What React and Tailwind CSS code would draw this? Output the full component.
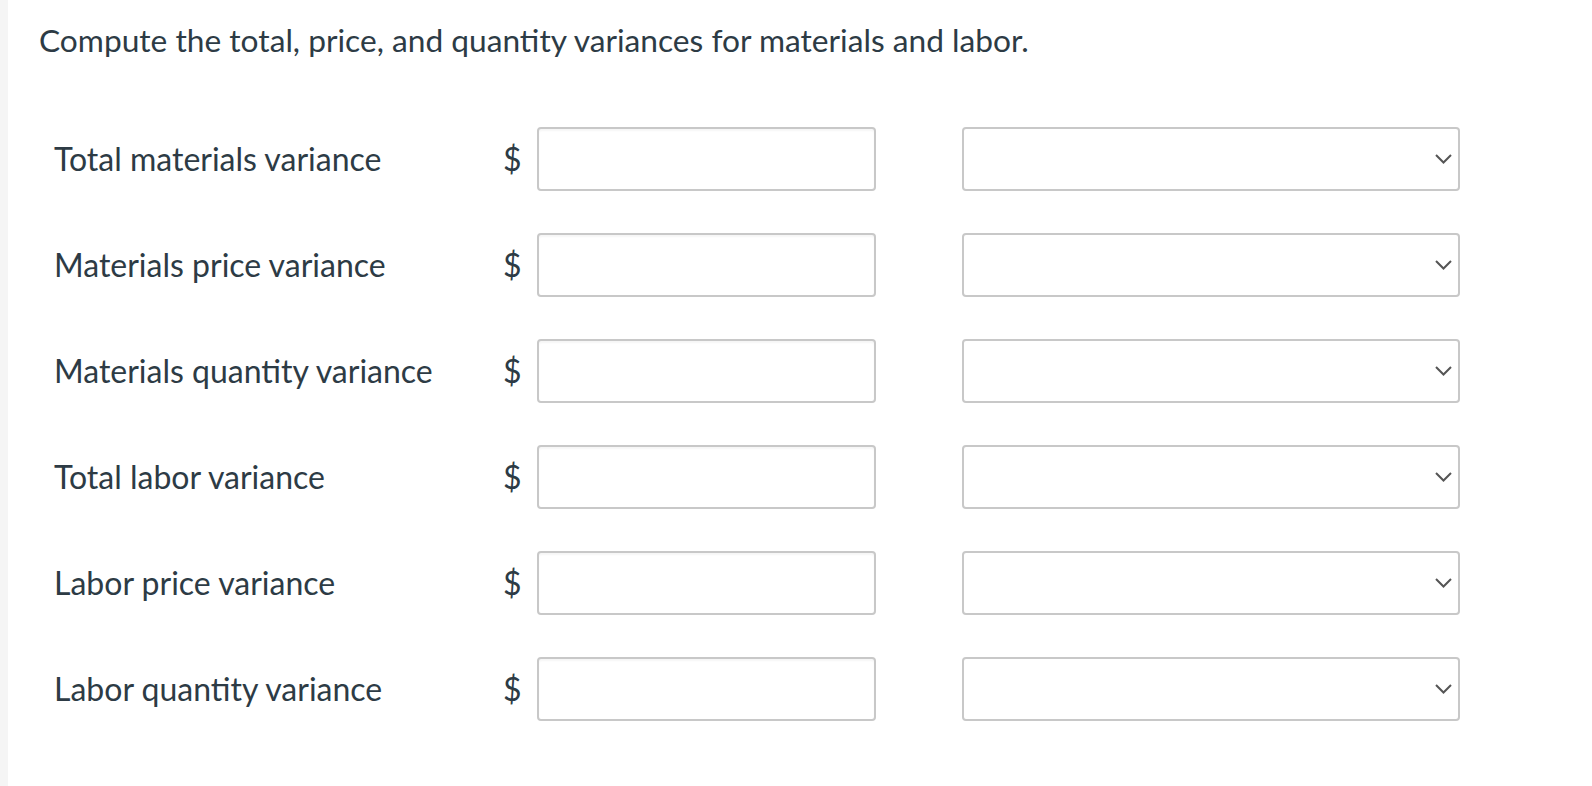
const rows = [
  'Total materials variance',
  'Materials price variance',
  'Materials quantity variance',
  'Total labor variance',
  'Labor price variance',
  'Labor quantity variance',
];

const Chevron = () => (
  <svg width="17" height="10" viewBox="0 0 17 10" fill="none">
    <polyline points="1,1 8.5,8.5 16,1" stroke="#555555" strokeWidth="2" />
  </svg>
);

const App = () => {
  return (
    <div
      className="flex min-h-[786px] w-full bg-white text-[#2d3b45]"
      style={{ fontFamily: 'Lato, "Open Sans", sans-serif' }}
    >
      {/* left gutter */}
      <div className="w-[8px] shrink-0 bg-[#f5f5f5]" />

      <div className="flex-1 pl-[31px] pt-[20px]">
        <p className="text-[31.7px] leading-[40px]">
          Compute the total, price, and quantity variances for materials and labor.
        </p>

        <div className="mt-[67px] flex flex-col gap-[42px] pl-[15px]">
          {rows.map((label) => (
            <div key={label} className="flex h-[64px] items-center">
              <span className="w-[449px] shrink-0 text-[32px] leading-[40px]">{label}</span>
              <span className="w-[34px] shrink-0 text-[32px] leading-[40px]">$</span>
              <div className="h-[64px] w-[339px] shrink-0 rounded-[4px] border-2 border-[#c8c8c8] bg-white shadow-[inset_0_2px_2px_rgba(0,0,0,0.04)]" />
              <div className="ml-[86px] flex h-[64px] w-[498px] shrink-0 items-center justify-end rounded-[4px] border-2 border-[#c8c8c8] bg-white pr-[6px]">
                <Chevron />
              </div>
            </div>
          ))}
        </div>
      </div>
    </div>
  );
};

export default App;
